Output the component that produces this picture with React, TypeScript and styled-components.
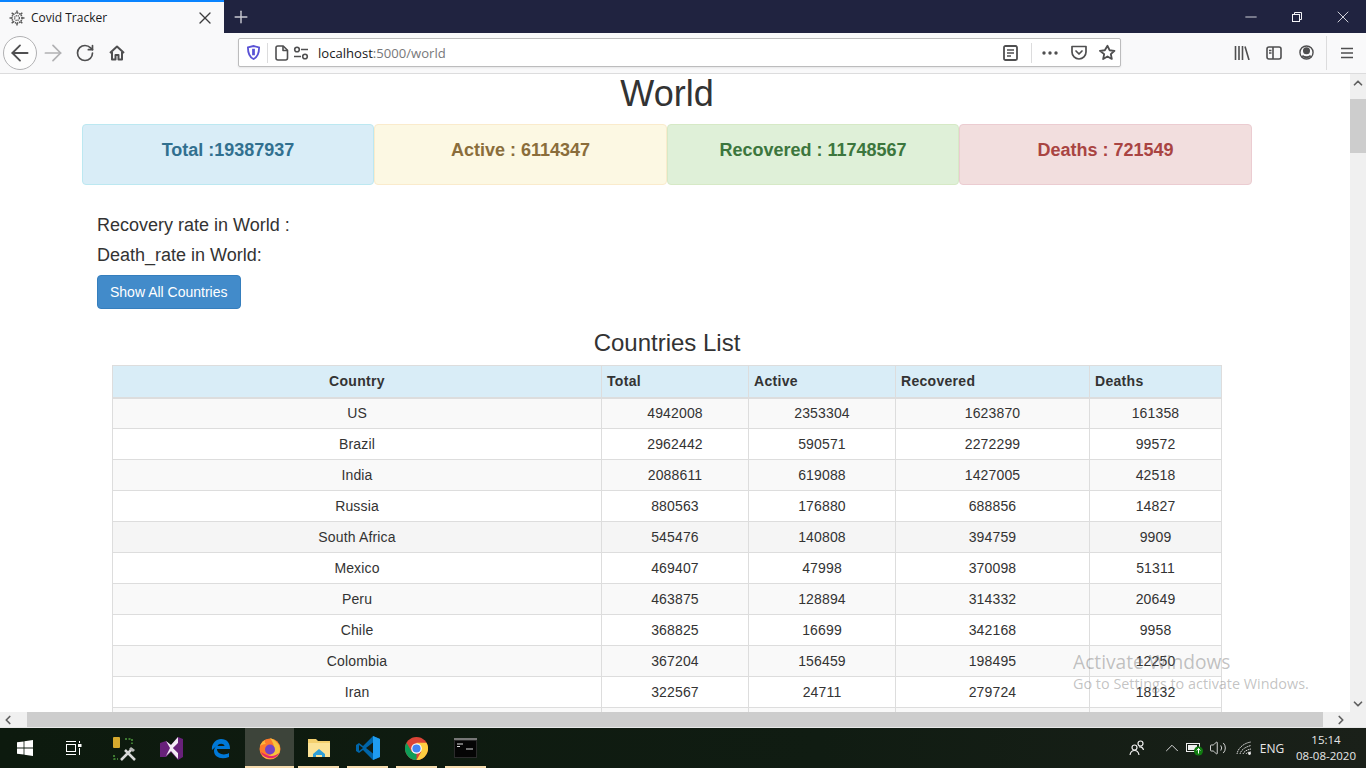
import React from 'react';
import styled, { createGlobalStyle } from 'styled-components';
import { ArrowLeft, ArrowRight, RotateCw, Minus, Plus, X, ChevronLeft, ChevronRight, ChevronUp, ChevronDown, Volume2 } from 'lucide-react';

const GlobalStyle = createGlobalStyle`
  html, body {
    margin: 0;
    padding: 0;
    height: 100%;
    overflow: hidden;
    background: #fff;
  }
  * { box-sizing: border-box; }
`;

const Screen = styled.div`
  position: relative;
  width: 1366px;
  height: 768px;
  display: flex;
  flex-direction: column;
  overflow: hidden;
  font-family: "Liberation Sans", Arial, sans-serif;
`;

/* browser chrome */
const TabBar = styled.div`
  height: 33px;
  flex: none;
  display: flex;
  background: #202340;
  color: #fff;
`;

const Tab = styled.div`
  width: 224px;
  display: flex;
  align-items: center;
  padding: 0 9px 0 9px;
  background: #f9f9fa;
  border-top: 2px solid #0a84ff;
  color: #18191a;
  font: 12px "Open Sans", sans-serif;
`;

const TabTitle = styled.span`
  margin-left: 6px;
  flex: 1;
`;

const NewTab = styled.div`
  width: 34px;
  display: flex;
  align-items: center;
  justify-content: center;
  color: #c9cad2;
`;

const WindowControls = styled.div`
  margin-left: auto;
  display: flex;
`;

const WindowButton = styled.div`
  width: 46px;
  display: flex;
  align-items: center;
  justify-content: center;
  color: #f4f4f8;
`;

const Toolbar = styled.div`
  height: 41px;
  flex: none;
  display: flex;
  align-items: center;
  padding: 0 0 1px 3px;
  background: #f9f9fa;
  border-bottom: 1px solid #dcdcdd;
  color: #4f4f50;
`;

const BackCircle = styled.div`
  width: 34px;
  height: 34px;
  border: 1px solid #b1b1b3;
  border-radius: 50%;
  background: #fdfdfd;
  display: flex;
  align-items: center;
  justify-content: center;
`;

const Slot = styled.div<{ $dim?: boolean }>`
  width: 32px;
  height: 32px;
  display: flex;
  align-items: center;
  justify-content: center;
  color: ${(p) => (p.$dim ? '#b1b1b3' : '#4f4f50')};
`;

const UrlBar = styled.div`
  margin-left: 105px;
  width: 883px;
  height: 29px;
  display: flex;
  align-items: center;
  background: #fff;
  border: 1px solid #bcbcbd;
  border-radius: 2px;
  box-shadow: 0 1px 2px rgba(0, 0, 0, 0.08);
  padding-left: 6px;
`;

const Address = styled.span`
  margin-left: 8px;
  font: 13.1px "Open Sans", sans-serif;
  color: #18191a;
  flex: 1;
`;

const AddressDim = styled.span`
  color: #77787a;
`;

const Divider = styled.div<{ $h: number }>`
  width: 1px;
  height: ${(p) => p.$h}px;
  background: #dcdcdd;
  flex: none;
`;

const UrlIcon = styled.div<{ $w: number }>`
  width: ${(p) => p.$w}px;
  display: flex;
  align-items: center;
  justify-content: center;
  flex: none;
`;

const RightTools = styled.div`
  margin-left: 105px;
  display: flex;
  align-items: center;
`;

/* page viewport */
const Viewport = styled.div`
  flex: 1;
  min-height: 0;
  display: flex;
`;

const Page = styled.div`
  flex: 1;
  min-width: 0;
  overflow: hidden;
  background: #fff;
  color: #333;
`;

const Container = styled.div`
  width: 1170px;
  margin-left: 82px;
`;

const Heading = styled.h1`
  margin: 0;
  height: 50px;
  font-size: 36px;
  font-weight: 400;
  line-height: 40px;
  text-align: center;
`;

const Cards = styled.div`
  display: grid;
  grid-template-columns: 292px 293px 292px 293px;
`;

const tones = {
  info: ['#d9edf7', '#bce8f1', '#31708f'],
  warning: ['#fcf8e3', '#faebcc', '#8a6d3b'],
  success: ['#dff0d8', '#d6e9c6', '#3c763d'],
  danger: ['#f2dede', '#ebccd1', '#a94442'],
};

const Card = styled.div<{ $tone: keyof typeof tones }>`
  height: 61px;
  padding-top: 15px;
  border: 1px solid ${(p) => tones[p.$tone][1]};
  border-radius: 4px;
  background: ${(p) => tones[p.$tone][0]};
  color: ${(p) => tones[p.$tone][2]};
  font-size: 18px;
  font-weight: 700;
  line-height: 20px;
  text-align: center;
`;

const Rates = styled.div`
  padding: 25px 15px 0;
`;

const Rate = styled.div`
  font-size: 18px;
  line-height: 30px;
`;

const ShowButton = styled.button`
  display: block;
  margin-top: 5px;
  height: 34px;
  padding: 6px 12px;
  border: 1px solid #357ebd;
  border-radius: 4px;
  background: #428bca;
  color: #fff;
  font: 14px/20px "Liberation Sans", Arial, sans-serif;
`;

const ListTitle = styled.h3`
  margin: 21px 0 9px;
  font-size: 24px;
  font-weight: 400;
  line-height: 26px;
  text-align: center;
`;

const Table = styled.table`
  width: 1110px;
  margin-left: 30px;
  border-collapse: collapse;
  table-layout: fixed;
  font-size: 14px;
`;

const HeadCell = styled.th<{ $center?: boolean }>`
  height: 32px;
  padding: 0 5px;
  border: 1px solid #ddd;
  border-bottom-width: 2px;
  background: #d9edf7;
  line-height: 20px;
  font-weight: 700;
  letter-spacing: 0.3px;
  text-align: ${(p) => (p.$center ? 'center' : 'left')};
`;

const Row = styled.tr<{ $striped: boolean; $hover: boolean }>`
  background: ${(p) => (p.$hover ? '#f5f5f5' : p.$striped ? '#f9f9f9' : '#fff')};
`;

const Cell = styled.td`
  height: 31px;
  padding: 0 5px;
  border: 1px solid #ddd;
  line-height: 20px;
  letter-spacing: 0.15px;
  text-align: center;
`;

const VScroll = styled.div`
  width: 16px;
  flex: none;
  background: #f0f0f0;
  display: flex;
  flex-direction: column;
  align-items: center;
  color: #606060;
`;

const ArrowBox = styled.div<{ $h: number }>`
  width: 16px;
  height: ${(p) => p.$h}px;
  flex: none;
  display: flex;
  align-items: center;
  justify-content: center;
`;

const VThumb = styled.div`
  width: 16px;
  height: 54px;
  margin-top: 8px;
  margin-bottom: auto;
  background: #cdcdcd;
`;

const HScroll = styled.div`
  height: 16px;
  flex: none;
  display: flex;
  align-items: center;
  background: #f0f0f0;
  border-bottom: 1px solid #e8e8e8;
  color: #606060;
`;

const HThumb = styled.div`
  width: 1296px;
  height: 15px;
  background: #cdcdcd;
`;

const HArrow = styled.div<{ $end?: boolean }>`
  width: 27px;
  display: flex;
  flex: none;
  justify-content: ${(p) => (p.$end ? 'flex-end' : 'flex-start')};
  padding: ${(p) => (p.$end ? '0 2px 0 0' : '0 0 0 1px')};
`;

/* taskbar */
const Taskbar = styled.div`
  height: 40px;
  flex: none;
  display: flex;
  background: linear-gradient(90deg, #0d1a0e, #101c12 60%, #1a2019);
  color: #fff;
`;

const TaskItem = styled.div<{ $active?: boolean; $open?: boolean }>`
  position: relative;
  width: 49px;
  display: flex;
  align-items: center;
  justify-content: center;
  background: ${(p) => (p.$active ? '#3d443a' : 'transparent')};
  &::after {
    content: '';
    display: ${(p) => (p.$open ? 'block' : 'none')};
    position: absolute;
    left: ${(p) => (p.$active ? 0 : 4)}px;
    right: ${(p) => (p.$active ? 0 : 4)}px;
    bottom: 0;
    height: 2px;
    background: #f6dcae;
  }
`;

const Tray = styled.div`
  margin-left: auto;
  display: flex;
  align-items: center;
  font: 12px "Open Sans", sans-serif;
  color: #e8e8e8;
`;

const TrayIcon = styled.div<{ $w: number }>`
  width: ${(p) => p.$w}px;
  display: flex;
  align-items: center;
  justify-content: center;
`;

const Clock = styled.div`
  width: 70px;
  margin-left: 5px;
  line-height: 16px;
  text-align: center;
  font-size: 11.5px;
`;

const Watermark = styled.div`
  position: absolute;
  left: 1073px;
  top: 649px;
  font-family: "Open Sans", sans-serif;
  color: rgba(110, 110, 110, 0.42);
  pointer-events: none;
`;

const WatermarkTitle = styled.div`
  font-size: 19.2px;
  line-height: 26px;
`;

const WatermarkText = styled.div`
  font-size: 14.4px;
  line-height: 18px;
`;

const rows: [string, number, number, number, number][] = [
  ['US', 4942008, 2353304, 1623870, 161358],
  ['Brazil', 2962442, 590571, 2272299, 99572],
  ['India', 2088611, 619088, 1427005, 42518],
  ['Russia', 880563, 176880, 688856, 14827],
  ['South Africa', 545476, 140808, 394759, 9909],
  ['Mexico', 469407, 47998, 370098, 51311],
  ['Peru', 463875, 128894, 314332, 20649],
  ['Chile', 368825, 16699, 342168, 9958],
  ['Colombia', 367204, 156459, 198495, 12250],
  ['Iran', 322567, 24711, 279724, 18132],
];

const Favicon = () => (
  <svg width="16" height="16" viewBox="0 0 16 16" fill="none" stroke="#5a5a5a" strokeWidth="1.3">
    <circle cx="8" cy="8" r="5" strokeDasharray="1.4 .7" strokeWidth="1.6" />
    <circle cx="8" cy="8" r="2.4" strokeDasharray="1.2 .6" />
    <path d="M8 .5v2.500M8 13v2.500M.5 8H3M13 8h2.500M2.700 2.700l1.800 1.800M11.500 11.500l1.800 1.800M13.300 2.700l-1.800 1.800M4.500 11.500l-1.800 1.800" strokeWidth="1.500" />
  </svg>
);

const HomeIcon = () => (
  <svg width="16" height="16" viewBox="0 0 16 16" fill="none" stroke="currentColor" strokeWidth="2" strokeLinejoin="round">
    <path d="M1 8l7-6.500L15 8" />
    <path d="M3 7v7.500h3.500V10h3v4.500H13V7" />
  </svg>
);

const ShieldIcon = () => (
  <svg width="13" height="15" viewBox="0 0 14 16" fill="none">
    <path d="M1 2.500C3 2 5 1.500 7 1c2 .5 4 1 6 1.500C13 8 12 12.500 7 15 2 12.500 1 8 1 2.500z" stroke="#5a52d5" strokeWidth="2" />
    <path d="M7 4v7" stroke="#5a52d5" strokeWidth="3" />
  </svg>
);

const PageIcon = () => (
  <svg width="14" height="16" viewBox="0 0 14 16" fill="none" stroke="#4f4f50" strokeWidth="1.600" strokeLinejoin="round">
    <path d="M2.800 1h5.400L12.500 5.300V13a2 2 0 0 1-2 2H3a2 2 0 0 1-2-2V2.800A1.800 1.800 0 0 1 2.800 1z" />
    <path d="M8 1v4.500h4.500" />
  </svg>
);

const PermissionIcon = () => (
  <svg width="16" height="14" viewBox="0 0 16 14" fill="none" stroke="#4f4f50" strokeWidth="1.600">
    <circle cx="4" cy="3.500" r="2.300" />
    <path d="M8 3.500h7M1 10.500h7" />
    <circle cx="12" cy="10.500" r="2.300" />
  </svg>
);

const ReaderIcon = () => (
  <svg width="15" height="16" viewBox="0 0 15 16" fill="none" stroke="#4f4f50" strokeWidth="1.500">
    <rect x="1" y="1" width="13" height="14" rx="1.500" strokeWidth="1.800" />
    <path d="M4 5h7M4 8h7M4 11h4" />
  </svg>
);

const DotsIcon = () => (
  <svg width="16" height="4" viewBox="0 0 16 4" fill="#4f4f50">
    <circle cx="2" cy="2" r="1.700" />
    <circle cx="8" cy="2" r="1.700" />
    <circle cx="14" cy="2" r="1.700" />
  </svg>
);

const PocketIcon = () => (
  <svg width="16" height="15" viewBox="0 0 16 15" fill="none" stroke="#4f4f50" strokeWidth="1.700" strokeLinejoin="round">
    <path d="M1 1.500h14v5.500a7 7 0 0 1-14 0z" />
    <path d="M5 6l3 3 3-3" strokeLinecap="round" />
  </svg>
);

const StarIcon = () => (
  <svg width="17" height="17" viewBox="0 0 24 24" fill="none" stroke="#4f4f50" strokeWidth="2.600" strokeLinejoin="round">
    <path d="M12 2.500l2.900 6.300 6.900.8-5.100 4.700 1.400 6.800-6.100-3.400-6.100 3.400 1.400-6.800L1.300 9.600l6.900-.8z" />
  </svg>
);

const LibraryIcon = () => (
  <svg width="16" height="14" viewBox="0 0 16 14" fill="none" stroke="#4f4f50" strokeWidth="1.600">
    <path d="M1.500 0v14M5 0v14M8.500 0v14M11 .5L15 14" />
  </svg>
);

const SidebarIcon = () => (
  <svg width="16" height="14" viewBox="0 0 16 14" fill="none" stroke="#4f4f50" strokeWidth="1.600">
    <rect x="1" y="1" width="14" height="12" rx="2" />
    <path d="M7 1v12M3 4.500h2.500M3 7h2.500" />
  </svg>
);

const AccountIcon = () => (
  <svg width="15" height="15" viewBox="0 0 16 16" fill="none" stroke="#4f4f50" strokeWidth="1.500">
    <circle cx="8" cy="8" r="7" />
    <circle cx="8" cy="6.200" r="3" fill="#4f4f50" />
    <path d="M3.500 11.500c2.500 2 6.500 2 9 0" strokeWidth="2" />
  </svg>
);

const MenuIcon = () => (
  <svg width="14" height="12" viewBox="0 0 14 12" fill="none" stroke="#4f4f50" strokeWidth="1.700">
    <path d="M1 1.500h12M1 6h12M1 10.500h12" />
  </svg>
);

const RestoreIcon = () => (
  <svg width="10" height="10" viewBox="0 0 10 10" fill="none" stroke="currentColor">
    <rect x=".5" y="2.500" width="7" height="7" />
    <path d="M2.500 2.500V.5h7v7h-2" />
  </svg>
);

const WindowsLogo = () => (
  <svg width="16" height="16" viewBox="0 0 16 16" fill="#fff">
    <path d="M0 2.300l6.600-.9v6.200H0zM7.400 1.300L16 0v7.600H7.400zM0 8.400h6.600v6.200L0 13.700zM7.400 8.400H16V16l-8.600-1.300z" />
  </svg>
);

const TaskViewIcon = () => (
  <svg width="17" height="16" viewBox="0 0 17 16" fill="none" stroke="#fff">
    <rect x="1.500" y="4.500" width="9" height="7" />
    <path d="M1 1.500h10M1 14.500h10M14.500 1v2M14.500 8v7" />
    <rect x="13" y="4" width="3.500" height="3" fill="#fff" stroke="none" />
  </svg>
);

const ToolsIcon = () => (
  <svg width="26" height="26" viewBox="-2 -1 26 26" fill="none">
    <path d="M2 19v4h4M13 3h7v5M20 12v2" stroke="#4f9a3e" strokeWidth="1.500" strokeDasharray="2 1.500" />
    <rect x="1" y="1" width="7" height="11" rx="1" fill="#d6a92d" />
    <path d="M9 24L20 13M13 14l10 10" stroke="#d9d9d9" strokeWidth="2.500" />
    <path d="M19 11l4 3-2 2-4-3z" fill="#b7b7b7" />
  </svg>
);

const VsLogo = () => (
  <svg width="23" height="24" viewBox="0 0 23 24">
    <path d="M0 7l6-2 5 4 7-8 5 2v18l-5 3-7-8-5 5H0z" fill="#68217a" />
    <path d="M6 5l5 4 7-8v6l-5 5 5 5v6l-7-8-5 5 4-8z" fill="#fff" opacity=".92" />
    <path d="M18 7.500v9L13.200 12zM3.500 9.500L7 12l-3.500 2.500z" fill="#68217a" />
  </svg>
);

const EdgeLogo = () => (
  <svg width="21" height="21" viewBox="0 0 21 21" fill="none">
    <path d="M2 12C1 6 6 1 11 1c6 0 9 4 9 10H7c0 5 7 7 12 4v4c-8 3-15 0-15-6 0-2 1-4 3-5.500" fill="#0078d7" />
    <path d="M7.500 8h7c-.5-3-6-3-7 0z" fill="#101c12" />
  </svg>
);

const FirefoxLogo = () => (
  <svg width="24" height="24" viewBox="0 0 24 24">
    <circle cx="12" cy="13" r="10.500" fill="#ff7a2a" />
    <path d="M12 2c5 2 10 6 10 11 0 6-5 10-10 10-3 0-6-1-8-4 5 2 11 0 12-5 .6-4-1-8-4-12z" fill="#f7c23d" />
    <path d="M3 16c2 5 7 7 12 6 2-.5 5-2 6-5-3 3-10 5-18-1z" fill="#e5266e" />
    <circle cx="12" cy="13.500" r="5" fill="#7542c4" />
    <path d="M2 10c1-3 3-5 5-6-.5 2 0 3 1 4-3 0-5 1-6 2z" fill="#ffb43a" />
  </svg>
);

const FolderIcon = () => (
  <svg width="22" height="20" viewBox="0 0 22 20">
    <path d="M0 1h8l2 2h12v16H0z" fill="#f3cf6e" />
    <path d="M0 5h22v14H0z" fill="#fbe296" />
    <path d="M5 19v-3l6-5 6 5v3h-3v-2H8v2z" fill="#2f9fd8" />
  </svg>
);

const VsCodeLogo = () => (
  <svg width="24" height="24" viewBox="0 0 24 24">
    <path d="M17 0l7 3v18l-7 3-10-10-4 3-3-2v-6l3-2 4 3z" fill="#0065a9" />
    <path d="M17 0l7 3v18l-7 3z" fill="#1f9cf0" />
    <path d="M17 6.500L10 12l7 5.500z" fill="#101c12" />
    <path d="M3 9l4 3-4 3z" fill="#101c12" />
  </svg>
);

const ChromeLogo = () => (
  <svg width="23" height="23" viewBox="0 0 24 24">
    <circle cx="12" cy="12" r="12" fill="#db4437" />
    <path d="M12 24A12 12 0 0 1 1.600 6L7 15.500l5 2z" fill="#0f9d58" />
    <path d="M12 24a12 12 0 0 0 10.400-18H12l5 9.500z" fill="#ffcd40" />
    <circle cx="12" cy="12" r="5.500" fill="#fff" />
    <circle cx="12" cy="12" r="4.300" fill="#4285f4" />
  </svg>
);

const ConsoleIcon = () => (
  <svg width="23" height="20" viewBox="0 0 23 20">
    <rect width="23" height="20" fill="#2b2b2b" />
    <rect x="1" y="3" width="21" height="16" fill="#050505" />
    <rect width="23" height="2" fill="#777" />
    <path d="M3 6h6M3 8.500h3M12 11h7" stroke="#ddd" strokeWidth="1.200" />
  </svg>
);

const PeopleIcon = () => (
  <svg width="16" height="16" viewBox="0 0 16 16" fill="none" stroke="#eee" strokeWidth="1.200">
    <circle cx="5.500" cy="7.500" r="2.500" />
    <path d="M1 15c.5-3 2-4.500 4.500-4.500S9.500 12 10 15" />
    <circle cx="11.500" cy="3.500" r="2.500" />
    <path d="M10 7c2-.5 4 .5 4.500 3" />
  </svg>
);

const BatteryIcon = () => (
  <svg width="18" height="15" viewBox="0 0 18 15">
    <rect x=".5" y="2.500" width="13" height="8" fill="none" stroke="#eee" />
    <rect x="2" y="4" width="9" height="5" fill="#eee" />
    <circle cx="12.500" cy="10" r="4.500" fill="#107c10" />
    <path d="M12.500 7.500v5M10.800 9.500l1.700-2 1.700 2" stroke="#fff" fill="none" />
  </svg>
);

const WifiIcon = () => (
  <svg width="16" height="14" viewBox="0 0 16 14" fill="none" stroke="#d8d8d8" strokeWidth="1">
    <path d="M1 13C2 7 8 2 15 1M4 13c1-4 5-7 11-8.500M7 13c.7-2 3-4 8-5M10 13c.5-1 2-2 5-2" strokeDasharray="1.500 .6" />
    <circle cx="13.500" cy="12.500" r="1.400" fill="#eee" stroke="none" />
  </svg>
);

export default function App() {
  return (
    <Screen>
      <GlobalStyle />
      <TabBar>
        <Tab>
          <Favicon />
          <TabTitle>Covid Tracker</TabTitle>
          <X size={20} color="#3c3c3e" strokeWidth={1.6} />
        </Tab>
        <NewTab>
          <Plus size={20} strokeWidth={1.7} />
        </NewTab>
        <WindowControls>
          <WindowButton>
            <Minus size={18} strokeWidth={1.1} />
          </WindowButton>
          <WindowButton>
            <RestoreIcon />
          </WindowButton>
          <WindowButton>
            <X size={20} strokeWidth={1} />
          </WindowButton>
        </WindowControls>
      </TabBar>

      <Toolbar>
        <BackCircle>
          <ArrowLeft size={26} strokeWidth={1.7} />
        </BackCircle>
        <Slot $dim>
          <ArrowRight size={26} strokeWidth={1.6} />
        </Slot>
        <Slot>
          <RotateCw size={20} strokeWidth={2} />
        </Slot>
        <Slot>
          <HomeIcon />
        </Slot>
        <UrlBar>
          <UrlIcon $w={16}>
            <ShieldIcon />
          </UrlIcon>
          <UrlIcon $w={6} />
          <Divider $h={20} />
          <UrlIcon $w={4} />
          <UrlIcon $w={20}>
            <PageIcon />
          </UrlIcon>
          <UrlIcon $w={18}>
            <PermissionIcon />
          </UrlIcon>
          <Address>
            localhost<AddressDim>:5000/world</AddressDim>
          </Address>
          <UrlIcon $w={22}>
            <ReaderIcon />
          </UrlIcon>
          <UrlIcon $w={10} />
          <Divider $h={20} />
          <UrlIcon $w={4} />
          <UrlIcon $w={28}>
            <DotsIcon />
          </UrlIcon>
          <UrlIcon $w={30}>
            <PocketIcon />
          </UrlIcon>
          <UrlIcon $w={26}>
            <StarIcon />
          </UrlIcon>
        </UrlBar>
        <RightTools>
          <Slot>
            <LibraryIcon />
          </Slot>
          <Slot>
            <SidebarIcon />
          </Slot>
          <Slot>
            <AccountIcon />
          </Slot>
          <UrlIcon $w={4} />
          <Divider $h={34} />
          <UrlIcon $w={4} />
          <Slot>
            <MenuIcon />
          </Slot>
        </RightTools>
      </Toolbar>

      <Viewport>
        <Page>
          <Container>
            <Heading>World</Heading>
            <Cards>
              <Card $tone="info">Total :19387937</Card>
              <Card $tone="warning">Active : 6114347</Card>
              <Card $tone="success">Recovered : 11748567</Card>
              <Card $tone="danger">Deaths : 721549</Card>
            </Cards>
            <Rates>
              <Rate>Recovery rate in World :</Rate>
              <Rate>Death_rate in World:</Rate>
              <ShowButton>Show All Countries</ShowButton>
            </Rates>
            <ListTitle>Countries List</ListTitle>
            <Table>
              <colgroup>
                <col width={489} />
                <col width={147} />
                <col width={147} />
                <col width={194} />
                <col width={132} />
              </colgroup>
              <thead>
                <tr>
                  <HeadCell $center>Country</HeadCell>
                  <HeadCell>Total</HeadCell>
                  <HeadCell>Active</HeadCell>
                  <HeadCell>Recovered</HeadCell>
                  <HeadCell>Deaths</HeadCell>
                </tr>
              </thead>
              <tbody>
                {rows.map((r, i) => (
                  <Row key={r[0]} $striped={i % 2 === 0} $hover={r[0] === 'South Africa'}>
                    {r.map((v, j) => (
                      <Cell key={j}>{v}</Cell>
                    ))}
                  </Row>
                ))}
                <Row $striped $hover={false}>
                  <Cell />
                  <Cell />
                  <Cell />
                  <Cell />
                  <Cell />
                </Row>
              </tbody>
            </Table>
          </Container>
        </Page>
        <VScroll>
          <ArrowBox $h={17}>
            <ChevronUp size={14} strokeWidth={3} />
          </ArrowBox>
          <VThumb />
          <ArrowBox $h={17}>
            <ChevronDown size={14} strokeWidth={3} />
          </ArrowBox>
        </VScroll>
      </Viewport>

      <HScroll>
        <HArrow>
          <ChevronLeft size={14} strokeWidth={3} />
        </HArrow>
        <HThumb />
        <HArrow $end>
          <ChevronRight size={14} strokeWidth={3} />
        </HArrow>
      </HScroll>

      <Taskbar>
        <TaskItem>
          <WindowsLogo />
        </TaskItem>
        <TaskItem>
          <TaskViewIcon />
        </TaskItem>
        <TaskItem>
          <ToolsIcon />
        </TaskItem>
        <TaskItem>
          <VsLogo />
        </TaskItem>
        <TaskItem>
          <EdgeLogo />
        </TaskItem>
        <TaskItem $active $open>
          <FirefoxLogo />
        </TaskItem>
        <TaskItem $open>
          <FolderIcon />
        </TaskItem>
        <TaskItem $open>
          <VsCodeLogo />
        </TaskItem>
        <TaskItem $open>
          <ChromeLogo />
        </TaskItem>
        <TaskItem $open>
          <ConsoleIcon />
        </TaskItem>
        <Tray>
          <TrayIcon $w={28}>
            <PeopleIcon />
          </TrayIcon>
          <TrayIcon $w={9} />
          <TrayIcon $w={24}>
            <ChevronUp size={22} strokeWidth={1} />
          </TrayIcon>
          <TrayIcon $w={22}>
            <BatteryIcon />
          </TrayIcon>
          <TrayIcon $w={24}>
            <Volume2 size={18} strokeWidth={1.2} />
          </TrayIcon>
          <TrayIcon $w={28}>
            <WifiIcon />
          </TrayIcon>
          <TrayIcon $w={28}>ENG</TrayIcon>
          <Clock>
            15:14
            <br />
            08-08-2020
          </Clock>
          <TrayIcon $w={5} />
        </Tray>
      </Taskbar>

      <Watermark>
        <WatermarkTitle>Activate Windows</WatermarkTitle>
        <WatermarkText>Go to Settings to activate Windows.</WatermarkText>
      </Watermark>
    </Screen>
  );
}
